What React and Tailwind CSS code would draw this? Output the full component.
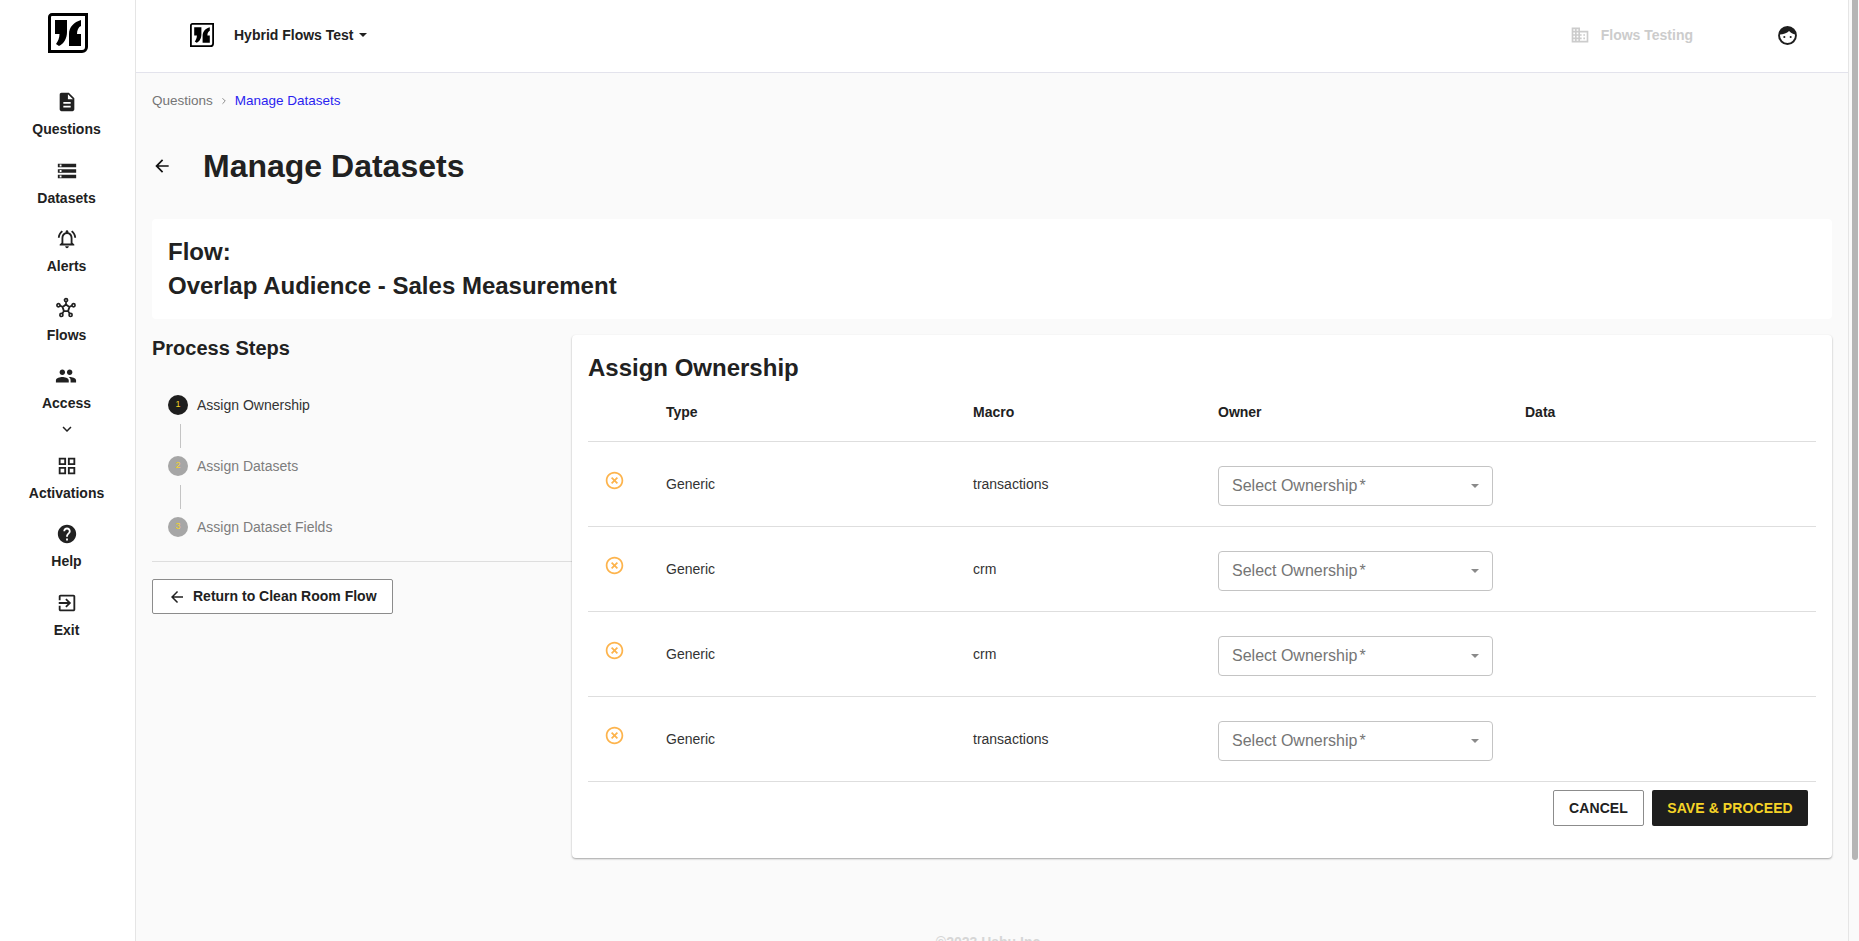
import { ChevronRight } from 'lucide-react';

const icons = {
  questions: 'M14 2H6c-1.1 0-1.99.9-1.99 2L4 20c0 1.1.89 2 1.99 2H18c1.1 0 2-.9 2-2V8l-6-6zm2 16H8v-2h8v2zm0-4H8v-2h8v2zm-3-5V3.5L18.5 9H13z',
  datasets: 'M2 20h20v-4H2v4zm2-3h2v2H4v-2zM2 4v4h20V4H2zm4 3H4V5h2v2zm-4 7h20v-4H2v4zm2-3h2v2H4v-2z',
  alerts: 'M18 16v-5c0-3.07-1.64-5.64-4.5-6.32V4c0-.83-.67-1.5-1.5-1.5s-1.5.67-1.5 1.5v.68C7.63 5.36 6 7.92 6 11v5l-2 2v1h16v-1l-2-2zm-2 1H8v-6c0-2.48 1.51-4.5 4-4.5s4 2.02 4 4.5v6zm-4 5c1.1 0 2-.9 2-2h-4c0 1.1.9 2 2 2zM7.58 4.08 6.15 2.65C3.75 4.48 2.17 7.3 2.03 10.5h2c.15-2.65 1.51-4.97 3.55-6.42zm12.39 6.42h2c-.15-3.2-1.73-6.02-4.12-7.85l-1.42 1.43c2.02 1.45 3.39 3.77 3.54 6.42z',
  access: 'M16 11c1.66 0 2.99-1.34 2.99-3S17.66 5 16 5c-1.66 0-3 1.34-3 3s1.34 3 3 3zm-8 0c1.66 0 2.99-1.34 2.99-3S9.66 5 8 5C6.34 5 5 6.34 5 8s1.34 3 3 3zm0 2c-2.33 0-7 1.17-7 3.5V19h14v-2.5c0-2.33-4.67-3.5-7-3.5zm8 0c-.29 0-.62.02-.97.05 1.16.84 1.97 1.97 1.97 3.45V19h6v-2.5c0-2.33-4.67-3.5-7-3.5z',
  activations: 'M3 3v8h8V3H3zm6 6H5V5h4v4zm-6 4v8h8v-8H3zm6 6H5v-4h4v4zm4-16v8h8V3h-8zm6 6h-4V5h4v4zm-6 4v8h8v-8h-8zm6 6h-4v-4h4v4z',
  help: 'M12 2C6.48 2 2 6.48 2 12s4.48 10 10 10 10-4.48 10-10S17.52 2 12 2zm1 17h-2v-2h2v2zm2.07-7.75-.9.92C13.45 12.9 13 13.5 13 15h-2v-.5c0-1.1.45-2.1 1.17-2.83l1.24-1.26c.37-.36.59-.86.59-1.41 0-1.1-.9-2-2-2s-2 .9-2 2H8c0-2.21 1.79-4 4-4s4 1.79 4 4c0 .88-.36 1.68-.93 2.25z',
  exit: 'M10.09 15.59 11.5 17l5-5-5-5-1.41 1.41L12.67 11H3v2h9.67l-2.58 2.59zM19 3H5c-1.11 0-2 .9-2 2v4h2V5h14v14H5v-4H3v4c0 1.1.89 2 2 2h14c1.1 0 2-.9 2-2V5c0-1.1-.9-2-2-2z',
  back: 'M20 11H7.83l5.59-5.59L12 4l-8 8 8 8 1.41-1.41L7.83 13H20v-2z',
  remove: 'M14.59 8 12 10.59 9.41 8 8 9.41 10.59 12 8 14.59 9.41 16 12 13.41 14.59 16 16 14.59 13.41 12 16 9.41 14.59 8zM12 2C6.47 2 2 6.47 2 12s4.47 10 10 10 10-4.47 10-10S17.53 2 12 2zm0 18c-4.41 0-8-3.59-8-8s3.59-8 8-8 8 3.59 8 8-3.59 8-8 8z',
  domain: 'M12 7V3H2v18h20V7H12zM6 19H4v-2h2v2zm0-4H4v-2h2v2zm0-4H4V9h2v2zm0-4H4V5h2v2zm4 12H8v-2h2v2zm0-4H8v-2h2v2zm0-4H8V9h2v2zm0-4H8V5h2v2zm10 12h-8v-2h2v-2h-2v-2h2v-2h-2V9h8v10zm-2-8h-2v2h2v-2zm0 4h-2v2h2v-2z',
  expand: 'M16.59 8.59 12 13.17 7.41 8.59 6 10l6 6 6-6z',
};

function Icon({ d, className }) {
  return (
    <svg viewBox="0 0 24 24" fill="currentColor" className={className}>
      <path d={d} />
    </svg>
  );
}

function Logo({ className }) {
  return (
    <svg viewBox="0 0 40 40" className={className}>
      <path d="M4 1.5H38.5V34a4.5 4.5 0 0 1-4.5 4.5H1.5V4A2.5 2.5 0 0 1 4 1.5z" fill="#fff" stroke="#000" strokeWidth="3" />
      <path d="M7 7H19V19C19 25 16 31 11 33L8 31C10 28 11.5 25 11.5 21H7z" fill="#000" />
      <path d="M33 7V13C30.5 14 29 17 29 21H33V33H21V21C21 14 26 9 33 7z" fill="#000" />
    </svg>
  );
}

function FlowsIcon({ className }) {
  return (
    <svg viewBox="0 0 24 24" fill="none" stroke="currentColor" strokeWidth="1.8" className={className}>
      <path d="M12 8.2 15.7 11 14.3 15.4H9.7L8.3 11z" strokeWidth="2" />
      <path d="M12 5V8M5.4 9.4 8.3 10.6M18.6 9.4 15.7 10.6M8 18 9.6 15.6M16 18 14.4 15.6" />
      <circle cx="12" cy="3.4" r="1.7" />
      <circle cx="3.8" cy="9" r="1.7" />
      <circle cx="20.2" cy="9" r="1.7" />
      <circle cx="7" cy="19.6" r="1.7" />
      <circle cx="17" cy="19.6" r="1.7" />
    </svg>
  );
}

function AvatarIcon({ className }) {
  return (
    <svg viewBox="0 0 18 18" className={className}>
      <circle cx="9" cy="9" r="8" fill="#fff" stroke="#1e1e1e" strokeWidth="1.8" />
      <path d="M1.5 8C2 3.5 5 1 9 1s7 2.5 7.5 7C14 7.5 12 6.5 10.5 4.8 8.5 6.8 5 8 1.5 8z" fill="#1e1e1e" />
      <circle cx="6" cy="10.4" r="1" fill="#1e1e1e" />
      <circle cx="12" cy="10.4" r="1" fill="#1e1e1e" />
    </svg>
  );
}

const navItems = [
  { label: 'Questions', d: icons.questions },
  { label: 'Datasets', d: icons.datasets },
  { label: 'Alerts', d: icons.alerts },
  { label: 'Flows', flows: true },
  { label: 'Access', d: icons.access, more: true },
  { label: 'Activations', d: icons.activations },
  { label: 'Help', d: icons.help },
  { label: 'Exit', d: icons.exit },
];

const steps = [
  { n: 1, label: 'Assign Ownership', active: true },
  { n: 2, label: 'Assign Datasets' },
  { n: 3, label: 'Assign Dataset Fields' },
];

const rows = ['transactions', 'crm', 'crm', 'transactions'];

const gridCols = 'grid grid-cols-[78px_307px_245px_307px_1fr]';

function Sidebar() {
  return (
    <aside className="w-[136px] shrink-0 bg-white border-r border-[#e5e5e5] flex flex-col items-center pt-[13px]">
      <Logo className="w-10 h-10" />
      <nav className="mt-[36px] pr-[2px] flex flex-col items-center w-full">
        {navItems.map((item) => (
          <div key={item.label} className="flex flex-col items-center w-full">
            <div className="h-[68.5px] flex flex-col items-center pt-[2px] text-[#212121]">
              {item.flows ? <FlowsIcon className="w-[22px] h-[22px]" /> : <Icon d={item.d} className="w-[22px] h-[22px]" />}
              <span className="mt-[7px] text-[14px] leading-[18px] font-bold">{item.label}</span>
            </div>
            {item.more && <Icon d={icons.expand} className="w-[18px] h-[18px] -mt-[12px] mb-[15px] text-[#212121]" />}
          </div>
        ))}
      </nav>
    </aside>
  );
}

function Header() {
  return (
    <header className="h-[73px] shrink-0 bg-white border-b border-[#e3e3ec] flex items-center pl-[54px] pr-[51px] pb-[2px]">
      <Logo className="w-6 h-6" />
      <span className="ml-[20px] text-[14px] font-bold text-[#212121]">Hybrid Flows Test</span>
      <span className="ml-[5px] border-x-[4px] border-x-transparent border-t-[4px] border-t-[#212121]" />
      <Icon d={icons.domain} className="ml-auto w-[20px] h-[20px] text-[#cccccc]" />
      <span className="ml-[11px] mr-[85px] text-[14px] font-bold text-[#cccccc]">Flows Testing</span>
      <AvatarIcon className="w-[19px] h-[19px]" />
    </header>
  );
}

function ProcessSteps() {
  return (
    <div className="w-[420px] shrink-0">
      <h2 className="text-[20px] leading-[26px] font-bold text-[#212121]">Process Steps</h2>
      <div className="mt-[34px] pl-[16px]">
        {steps.map((s, i) => (
          <div key={s.n}>
            <div className="flex items-center h-[20px]">
              <span className={`w-[20px] h-[20px] rounded-full flex items-center justify-center text-[9px] text-[#f5d327] ${s.active ? 'bg-[#1e1e1e]' : 'bg-[#a6a6a6]'}`}>{s.n}</span>
              <span className={`ml-[9px] text-[14px] ${s.active ? 'text-[#333333]' : 'text-[#7d7d7d]'}`}>{s.label}</span>
            </div>
            {i < 2 && <div className="ml-[12px] w-px h-[24px] my-[8.5px] bg-[#c4c4c4]" />}
          </div>
        ))}
      </div>
      <div className="mt-[24px] h-px bg-[#dedede]" />
      <button className="mt-[17px] w-[241px] h-[35px] bg-white border border-[#8c8c8c] rounded-[2px] flex items-center pl-[15px] text-[14px] font-bold text-[#212121]">
        <Icon d={icons.back} className="w-[18px] h-[18px]" />
        <span className="ml-[7px]">Return to Clean Room Flow</span>
      </button>
    </div>
  );
}

function OwnershipCard() {
  return (
    <div className="flex-1 h-[523px] bg-white rounded-[4px] shadow-[0_1px_2px_rgba(0,0,0,0.35)] px-[16px] pt-[18px]">
      <h2 className="text-[24px] leading-[30px] font-bold text-[#212121]">Assign Ownership</h2>
      <div className={`${gridCols} h-[59px] pt-[1px] items-center border-b border-[#dedede] text-[14px] font-bold text-[#212121]`}>
        <span />
        <span>Type</span>
        <span>Macro</span>
        <span>Owner</span>
        <span>Data</span>
      </div>
      {rows.map((macro, i) => (
        <div key={i} className={`${gridCols} h-[85px] items-center border-b border-[#dedede] text-[14px] text-[#333333]`}>
          <span className="pl-[16px] -mt-[8px]">
            <Icon d={icons.remove} className="w-[21px] h-[21px] text-[#fdb44d]" />
          </span>
          <span>Generic</span>
          <span>{macro}</span>
          <div className="w-[275px] h-[40px] mt-[4px] border border-[#c4c4c4] rounded-[4px] flex items-center pl-[13px] pr-[13px] text-[16px] text-[#757575]">
            <span>Select Ownership</span>
            <span className="ml-[2px]">*</span>
            <span className="ml-auto border-x-[4px] border-x-transparent border-t-[4px] border-t-[#8a8a8a]" />
          </div>
          <span />
        </div>
      ))}
      <div className="flex justify-end gap-[8px] pr-[8px] mt-[8px]">
        <button className="w-[91px] h-[36px] bg-white border border-[#8c8c8c] rounded-[2px] text-[14px] font-bold tracking-[0.1px] text-[#212121]">CANCEL</button>
        <button className="w-[156px] h-[36px] bg-[#1e1e1e] rounded-[2px] text-[14px] font-bold tracking-[0.1px] text-[#f5d327]">SAVE &amp; PROCEED</button>
      </div>
    </div>
  );
}

export default function App() {
  return (
    <div className="h-screen w-full flex overflow-hidden bg-[#fafafa] font-['Liberation_Sans',Arial,sans-serif]">
      <Sidebar />
      <div className="flex-1 min-w-0 flex flex-col overflow-hidden">
        <Header />
        <main className="flex-1 overflow-hidden px-[16px]">
          <div className="flex items-center mt-[20px] h-[16px] text-[13.5px]">
            <span className="text-[#757575]">Questions</span>
            <ChevronRight className="mx-[6px] w-[10px] h-[10px] text-[#757575]" />
            <span className="text-[#2a1ef0]">Manage Datasets</span>
          </div>
          <div className="flex items-center mt-[33px] h-[48px]">
            <Icon d={icons.back} className="w-[20px] h-[20px] text-[#111111]" />
            <h1 className="ml-[31px] text-[32px] font-bold text-[#212121]">Manage Datasets</h1>
          </div>
          <div className="mt-[29px] h-[100px] bg-white rounded-[4px] px-[16px] pt-[16px] text-[24px] leading-[34px] font-bold text-[#212121]">
            <div>Flow:</div>
            <div>Overlap Audience - Sales Measurement</div>
          </div>
          <div className="flex mt-[16px]">
            <ProcessSteps />
            <OwnershipCard />
          </div>
          <p className="mt-[74px] pr-[4px] text-center text-[14px] font-bold text-[#d6d6d6]">©2023 Habu Inc.</p>
        </main>
      </div>
      <div className="w-[11px] shrink-0 bg-[#fafafa] border-l border-[#e5e5e5] pl-[3px] pr-px">
        <div className="h-[860px] rounded-b-full bg-[#b5b5b5]" />
      </div>
    </div>
  );
}
